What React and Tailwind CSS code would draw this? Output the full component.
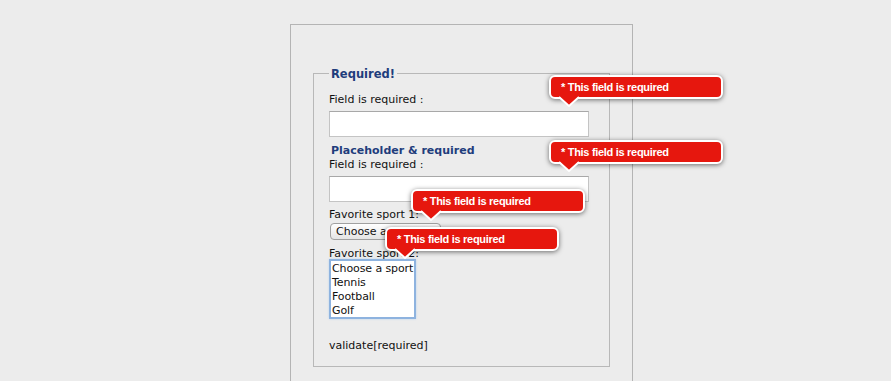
const tips = [
  { left: 549, top: 75 },
  { left: 549, top: 140 },
  { left: 411, top: 189 },
  { left: 385, top: 227 },
];

function Tip({ left, top }) {
  return (
    <div className="absolute" style={{ left, top }}>
      <div className="w-[174px] h-[24px] bg-[#e6170e] border-2 border-white rounded-[6px] shadow-[0_1px_5px_rgba(0,0,0,0.55)] px-[10px] flex items-center text-white text-[11px] font-bold tracking-[-0.3px] font-['Liberation_Sans',Arial,sans-serif]">
        * This field is required
      </div>
      <svg className="absolute left-[9px] top-[21px]" width="22" height="12" viewBox="0 0 22 12">
        <polygon points="1,0 21,0 11,10" fill="#e6170e" />
        <polyline points="1,1 11,10 21,1" fill="none" stroke="#fff" strokeWidth="2" />
      </svg>
    </div>
  );
}

export default function App() {
  return (
    <div className="relative w-[891px] h-[381px] overflow-hidden bg-[#ececec] text-[11px] leading-[14px] text-[#111] font-['DejaVu_Sans',sans-serif]">
      <div className="ml-[290px] mt-[24px] w-[343px] h-[400px] border border-[#b4b4b4] px-[22px] pt-[40px]">
        <fieldset className="border border-[#b8b8b8] px-[14px] pb-[13px]">
          <legend className="px-[2px] ml-[1px] font-bold text-[#1f3d7c] leading-[14px] text-[11.5px] pt-[2px]">Required!</legend>
          <div className="mt-[12px] ml-[1px]">Field is required :</div>
          <div className="mt-[4px] ml-[1px] w-[260px] h-[26px] bg-white border border-[#c4c4c4] border-t-[#a8a8a8]"></div>
          <div className="mt-[7px] ml-[3px] font-bold text-[#1f3d7c]">Placeholder &amp; required</div>
          <div className="ml-[1px]">Field is required :</div>
          <div className="mt-[4px] ml-[1px] w-[260px] h-[26px] bg-white border border-[#c4c4c4] border-t-[#a8a8a8]"></div>
          <div className="mt-[6px] ml-[1px]">Favorite sport 1:</div>
          <div className="mt-[1px] ml-[2px] w-[111px] h-[17px] rounded-[4px] border border-[#a0a0a0] bg-gradient-to-b from-white to-[#e4e4e4] px-[5px] flex items-center">
            Choose a sport
          </div>
          <div className="mt-[7px] ml-[1px]">Favorite sport 2:</div>
          <div className="-mt-[2px] ml-[1px] w-[87px] h-[60px] overflow-hidden whitespace-nowrap tracking-[-0.1px] bg-white border-2 border-[#8eb3df] shadow-[0_0_2px_#b9d3f0] pl-[1px] pt-[1px]">
            <div>Choose a sport</div>
            <div>Tennis</div>
            <div>Football</div>
            <div>Golf</div>
          </div>
          <div className="mt-[20px] ml-[1px]">validate[required]</div>
        </fieldset>
      </div>
      {tips.map((t, i) => (
        <Tip key={i} left={t.left} top={t.top} />
      ))}
    </div>
  );
}
